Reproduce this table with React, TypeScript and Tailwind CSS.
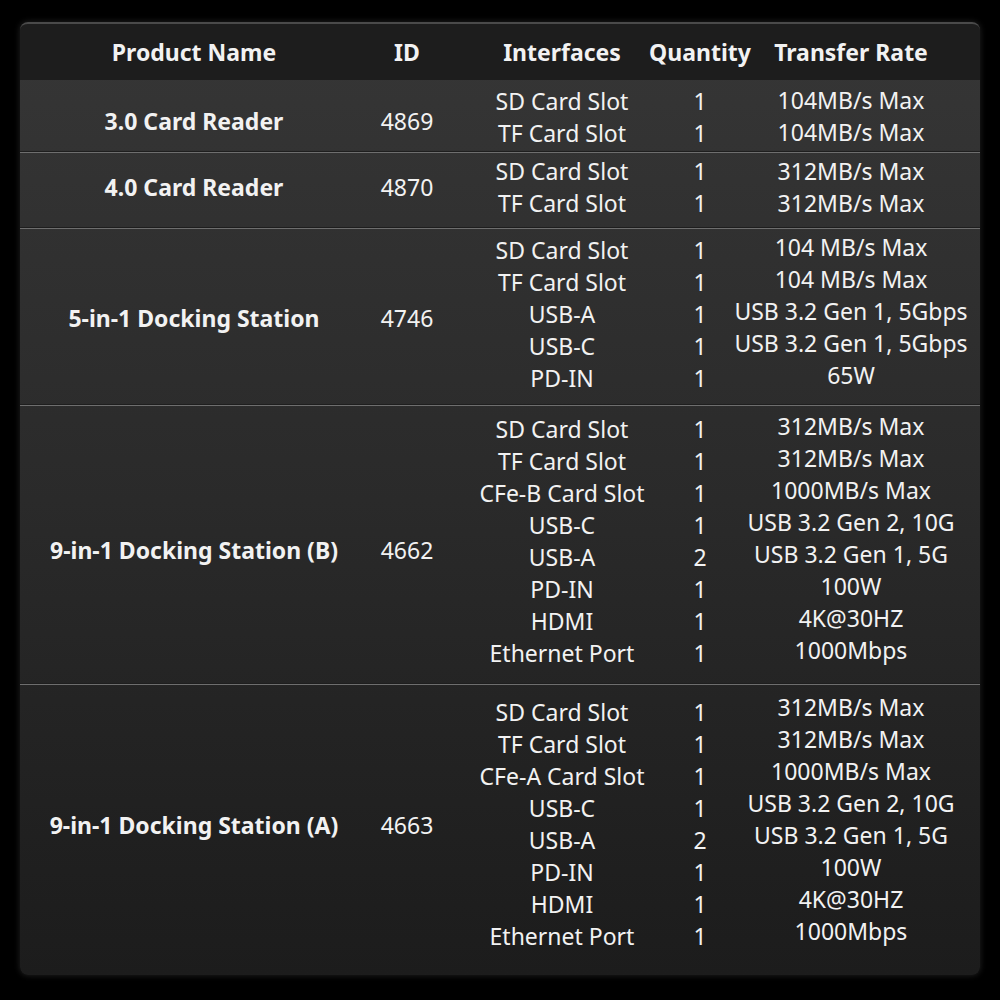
const products = [
  {
    name: "3.0 Card Reader",
    id: "4869",
    h: "h-[71px]",
    namePt: "pt-[25px]",
    portPt: "pt-[5px]",
    ratePt: "pt-[4px]",
    ports: [
      ["SD Card Slot", "1", "104MB/s Max"],
      ["TF Card Slot", "1", "104MB/s Max"],
    ],
  },
  {
    name: "4.0 Card Reader",
    id: "4870",
    h: "h-[74px]",
    namePt: "pt-[18px]",
    portPt: "pt-[2px]",
    ratePt: "pt-[2px]",
    ports: [
      ["SD Card Slot", "1", "312MB/s Max"],
      ["TF Card Slot", "1", "312MB/s Max"],
    ],
  },
  {
    name: "5-in-1 Docking Station",
    id: "4746",
    h: "h-[175px]",
    namePt: "pt-[73px]",
    portPt: "pt-[5px]",
    ratePt: "pt-[2px]",
    ports: [
      ["SD Card Slot", "1", "104 MB/s Max"],
      ["TF Card Slot", "1", "104 MB/s Max"],
      ["USB-A", "1", "USB 3.2 Gen 1, 5Gbps"],
      ["USB-C", "1", "USB 3.2 Gen 1, 5Gbps"],
      ["PD-IN", "1", "65W"],
    ],
  },
  {
    name: "9-in-1 Docking Station (B)",
    id: "4662",
    h: "h-[277px]",
    namePt: "pt-[128px]",
    portPt: "pt-[7px]",
    ratePt: "pt-[4px]",
    ports: [
      ["SD Card Slot", "1", "312MB/s Max"],
      ["TF Card Slot", "1", "312MB/s Max"],
      ["CFe-B Card Slot", "1", "1000MB/s Max"],
      ["USB-C", "1", "USB 3.2 Gen 2, 10G"],
      ["USB-A", "2", "USB 3.2 Gen 1, 5G"],
      ["PD-IN", "1", "100W"],
      ["HDMI", "1", "4K@30HZ"],
      ["Ethernet Port", "1", "1000Mbps"],
    ],
  },
  {
    name: "9-in-1 Docking Station (A)",
    id: "4663",
    h: "h-[290px]",
    namePt: "pt-[124px]",
    portPt: "pt-[11px]",
    ratePt: "pt-[6px]",
    ports: [
      ["SD Card Slot", "1", "312MB/s Max"],
      ["TF Card Slot", "1", "312MB/s Max"],
      ["CFe-A Card Slot", "1", "1000MB/s Max"],
      ["USB-C", "1", "USB 3.2 Gen 2, 10G"],
      ["USB-A", "2", "USB 3.2 Gen 1, 5G"],
      ["PD-IN", "1", "100W"],
      ["HDMI", "1", "4K@30HZ"],
      ["Ethernet Port", "1", "1000Mbps"],
    ],
  },
];

const cols = "grid grid-cols-[348px_78px_232px_44px_258px]";

export default function App() {
  return (
    <div className="w-[1000px] h-[1000px] bg-black pt-[22px] px-[20px] font-['Noto_Sans',sans-serif] text-[23px] leading-[32px] text-[#f2f2f2]">
      <div className="w-[960px] h-[953px] rounded-[8px] overflow-hidden border-t-2 border-[#4a4a4a] bg-gradient-to-b from-[#363636] via-[#2a2a2a] to-[#1c1c1c] shadow-[0_0_6px_rgba(60,60,60,0.6)]">
        <div className={`${cols} h-[56px] items-center bg-[#1d1d1d] font-bold`}>
          <div className="text-center">Product Name</div>
          <div className="text-center">ID</div>
          <div className="text-center">Interfaces</div>
          <div className="flex justify-center whitespace-nowrap">Quantity</div>
          <div className="text-center">Transfer Rate</div>
        </div>
        {products.map((p, i) => (
          <div key={p.id}>
            {i > 0 && (
              <>
                <div className="h-px bg-[#1e1e1e]" />
                <div className="h-px bg-[#6e6e6e]" />
              </>
            )}
            <div className={`${cols} ${p.h} items-start`}>
              <div className={`text-center font-bold whitespace-nowrap ${p.namePt}`}>{p.name}</div>
              <div className={`text-center ${p.namePt}`}>{p.id}</div>
              <div className={`flex flex-col items-center ${p.portPt}`}>
                {p.ports.map((r, j) => (
                  <div key={j} className="whitespace-nowrap">{r[0]}</div>
                ))}
              </div>
              <div className={`flex flex-col items-center ${p.portPt}`}>
                {p.ports.map((r, j) => (
                  <div key={j}>{r[1]}</div>
                ))}
              </div>
              <div className={`flex flex-col items-center ${p.ratePt}`}>
                {p.ports.map((r, j) => (
                  <div key={j} className="whitespace-nowrap">{r[2]}</div>
                ))}
              </div>
            </div>
          </div>
        ))}
      </div>
    </div>
  );
}
